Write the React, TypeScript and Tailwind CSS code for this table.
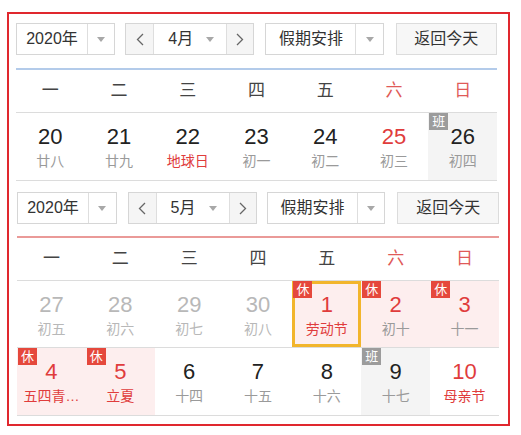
import React from "react";

const FONT = { fontFamily: '"Liberation Sans", "Noto Sans CJK SC", sans-serif' };

function Arrow() {
  return (
    <svg width="8" height="5" viewBox="0 0 8 5">
      <path d="M0 0 L8 0 L4 5 Z" fill="#a8a8a8" />
    </svg>
  );
}

function Chevron({ dir }: { dir: "l" | "r" }) {
  return (
    <svg width="8" height="13" viewBox="0 0 8 13">
      <path
        d={dir === "l" ? "M7 1 L1.5 6.5 L7 12" : "M1 1 L6.5 6.5 L1 12"}
        stroke="#666"
        strokeWidth="1.3"
        fill="none"
      />
    </svg>
  );
}

function Controls({ month, gaps }: { month: string; gaps: [number, number, number] }) {
  return (
    <div className="flex h-8 text-[16px] text-[#333]">
      <div className="flex w-[100px] border border-[#d6d6d6] bg-white">
        <div className="flex w-[70px] items-center justify-center">2020年</div>
        <div className="flex flex-1 items-center justify-center border-l border-[#dedede]">
          <Arrow />
        </div>
      </div>
      <div className="flex w-[130px] border border-[#d6d6d6] bg-white" style={{ marginLeft: gaps[0] }}>
        <div className="flex w-[28px] items-center justify-center border-r border-[#dedede] bg-[#f5f5f5]">
          <Chevron dir="l" />
        </div>
        <div className="flex flex-1 items-center">
          <span className="ml-[14px]">{month}</span>
          <span className="ml-auto mr-[12px] flex">
            <Arrow />
          </span>
        </div>
        <div className="flex w-[27px] items-center justify-center border-l border-[#dedede] bg-[#f5f5f5]">
          <Chevron dir="r" />
        </div>
      </div>
      <div className="flex w-[119px] border border-[#d6d6d6] bg-white" style={{ marginLeft: gaps[1] }}>
        <div className="flex w-[89px] items-center justify-center">假期安排</div>
        <div className="flex flex-1 items-center justify-center border-l border-[#dedede]">
          <Arrow />
        </div>
      </div>
      <div
        className="flex w-[102px] items-center justify-center border border-[#dcdcdc] bg-[#f7f7f7]"
        style={{ marginLeft: gaps[2] }}
      >
        返回今天
      </div>
    </div>
  );
}

const WEEK = ["一", "二", "三", "四", "五", "六", "日"];

function WeekRow() {
  return (
    <div className="grid h-[43px] grid-cols-7 border-b border-[#dcdcdc]">
      {WEEK.map((w, i) => (
        <div
          key={w}
          className={`flex items-center justify-center text-[17px] ${i >= 5 ? "text-[#e05a58]" : "text-[#444]"}`}
        >
          {w}
        </div>
      ))}
    </div>
  );
}

type Cell = {
  n: string;
  l: string;
  nc?: string;
  lc?: string;
  bg?: string;
  badge?: "休" | "班";
  today?: boolean;
};

function DayCell({ c }: { c: Cell }) {
  return (
    <div className={`relative flex flex-col items-center ${c.bg ?? ""}`}>
      {c.today && <div className="absolute inset-0 border-[3px] border-[#f2b52c]" />}
      {c.badge && (
        <div
          className={`absolute left-[1px] top-0 z-10 flex h-[17px] w-[19px] items-center justify-center text-[13px] leading-none text-white ${
            c.badge === "休" ? "bg-[#e5483c]" : "bg-[#9c9c9c]"
          }`}
        >
          {c.badge}
        </div>
      )}
      <div className={`mt-[12px] text-[22px] leading-[24px] ${c.nc ?? "text-[#222]"}`}>{c.n}</div>
      <div className={`mt-[3px] text-[14px] leading-[18px] ${c.lc ?? "text-[#9a9a9a]"}`}>{c.l}</div>
    </div>
  );
}

function DateRow({ cells, h }: { cells: Cell[]; h: string }) {
  return (
    <div className={`grid grid-cols-7 border-b border-[#dcdcdc] ${h}`}>
      {cells.map((c, i) => (
        <DayCell key={i} c={c} />
      ))}
    </div>
  );
}

const RED = "text-[#e03c3c]";
const PINK = "bg-[#fdeeee]";
const GRAY = "bg-[#f4f4f4]";
const FADE = "text-[#b8b8b8]";

const row1: Cell[] = [
  { n: "20", l: "廿八" },
  { n: "21", l: "廿九" },
  { n: "22", l: "地球日", lc: RED },
  { n: "23", l: "初一" },
  { n: "24", l: "初二" },
  { n: "25", l: "初三", nc: RED },
  { n: "26", l: "初四", bg: GRAY, badge: "班" },
];

const row2: Cell[] = [
  { n: "27", l: "初五", nc: FADE, lc: FADE },
  { n: "28", l: "初六", nc: FADE, lc: FADE },
  { n: "29", l: "初七", nc: FADE, lc: FADE },
  { n: "30", l: "初八", nc: FADE, lc: FADE },
  { n: "1", l: "劳动节", nc: RED, lc: RED, bg: PINK, badge: "休", today: true },
  { n: "2", l: "初十", nc: RED, bg: PINK, badge: "休" },
  { n: "3", l: "十一", nc: RED, bg: PINK, badge: "休" },
];

const row3: Cell[] = [
  { n: "4", l: "五四青…", nc: RED, lc: RED, bg: PINK, badge: "休" },
  { n: "5", l: "立夏", nc: RED, lc: RED, bg: PINK, badge: "休" },
  { n: "6", l: "十四" },
  { n: "7", l: "十五" },
  { n: "8", l: "十六" },
  { n: "9", l: "十七", bg: GRAY, badge: "班" },
  { n: "10", l: "母亲节", nc: RED, lc: RED },
];

export default function App() {
  return (
    <div className="h-[435px] w-[521px] bg-white pl-[7px] pt-[12px]" style={FONT}>
      <div className="h-[414px] w-[503px] border-2 border-[#e0282e]">
        <div className="ml-[7px] w-[481px] pt-[9px]">
          <Controls month="4月" gaps={[10, 11, 12]} />
          <div className="mt-[13px] h-[2px] bg-[#b3cbea]" />
          <WeekRow />
          <DateRow cells={row1} h="h-[68px]" />
        </div>
        <div className="ml-[8px] w-[482px] pt-[11px]">
          <Controls month="5月" gaps={[11, 10, 12]} />
          <div className="mt-[12px] h-[2px] bg-[#ea9a98]" />
          <WeekRow />
          <DateRow cells={row2} h="h-[67px]" />
          <DateRow cells={row3} h="h-[68px]" />
        </div>
      </div>
    </div>
  );
}
